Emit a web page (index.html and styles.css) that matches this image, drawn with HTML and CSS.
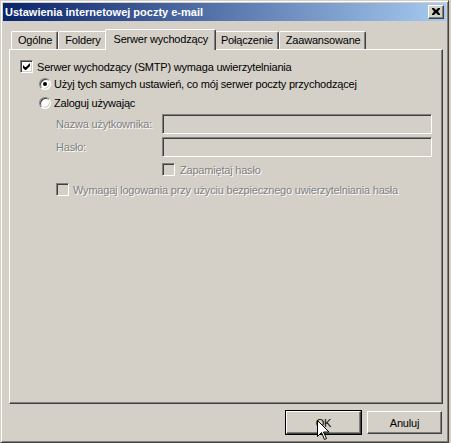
FILE: index.html
```html
<!DOCTYPE html>
<html lang="pl">
<head>
<meta charset="utf-8">
<title>Ustawienia internetowej poczty e-mail</title>
<link rel="stylesheet" href="styles.css">
</head>
<body>
<div class="window">
  <div class="titlebar">
    <span class="title">Ustawienia internetowej poczty e-mail</span>
    <span class="close-btn"><svg width="8" height="7" viewBox="0 0 8 7"><path d="M0 0h2l2 2 2-2h2v1l-2 2.5 2 2.5v1h-2l-2-2-2 2h-2v-1l2-2.5-2-2.5z" fill="#000"/></svg></span>
  </div>
  <div class="body">
    <div class="tabs">
      <div class="tab">Ogólne</div>
      <div class="tab">Foldery</div>
      <div class="tab active">Serwer wychodzący</div>
      <div class="tab">Połączenie</div>
      <div class="tab">Zaawansowane</div>
    </div>
    <div class="panel">
      <div class="row cb-row">
        <span class="checkbox checked"><svg width="7" height="7" viewBox="0 0 7 7"><path d="M0 2v3l2 2h1l4-4v-3l-4 4h-1z" fill="#000"/></svg></span>
        <span class="lbl">Serwer wychodzący (SMTP) wymaga uwierzytelniania</span>
      </div>
      <div class="row radio-row">
        <span class="radio"><span class="dot"></span></span>
        <span class="lbl">Użyj tych samych ustawień, co mój serwer poczty przychodzącej</span>
      </div>
      <div class="row radio-row second">
        <span class="radio"></span>
        <span class="lbl">Zaloguj używając</span>
      </div>
      <div class="field">
        <span class="flabel disabled">Nazwa użytkownika:</span>
        <span class="input"></span>
      </div>
      <div class="field field2">
        <span class="flabel disabled">Hasło:</span>
        <span class="input"></span>
      </div>
      <div class="row remember">
        <span class="checkbox dis"></span>
        <span class="lbl disabled">Zapamiętaj hasło</span>
      </div>
      <div class="row spa">
        <span class="checkbox dis"></span>
        <span class="lbl disabled">Wymagaj logowania przy użyciu bezpiecznego uwierzytelniania hasła</span>
      </div>
    </div>
    <div class="buttons">
      <span class="btn default">OK</span>
      <span class="btn">Anuluj</span>
    </div>
  </div>
  <svg class="cursor" width="13" height="21" viewBox="0 0 13 21"><path d="M0.5 0.5v16l4-4 3 7 2-1-3-6.5h5.5z" fill="#fff" stroke="#000" stroke-width="1"/></svg>
</div>
</body>
</html>
```
FILE: styles.css
```css
* { box-sizing: border-box; }
html, body { margin: 0; padding: 0; }
body {
  background: #d4d0c8;
  font-family: "Liberation Sans", Arial, sans-serif;
  font-size: 11px;
  color: #000;
}
.window {
  position: relative;
  width: 449px;
  height: 443px;
  background: #d4d0c8;
  border-top: 1px solid #d4d0c8;
  border-left: 1px solid #d4d0c8;
  border-right: 1px solid #404040;
  border-bottom: 1px solid #404040;
  box-shadow: inset 1px 1px 0 #fff, inset -1px -1px 0 #808080;
  padding: 2px;
  display: flex;
  flex-direction: column;
}
.titlebar {
  height: 18px;
  background: linear-gradient(to right, #0a246a, #a6caf0);
  display: flex;
  align-items: center;
  justify-content: space-between;
  padding-left: 2px;
  padding-right: 2px;
}
.title {
  color: #fff;
  font-weight: bold;
  font-size: 11px;
  white-space: nowrap;
}
.close-btn {
  width: 16px;
  height: 14px;
  background: #d4d0c8;
  border-top: 1px solid #fff;
  border-left: 1px solid #fff;
  border-right: 1px solid #404040;
  border-bottom: 1px solid #404040;
  box-shadow: inset -1px -1px 0 #808080;
  display: flex;
  align-items: center;
  justify-content: center;
  padding-bottom: 1px;
}
.close-btn svg { display: block; }
.body {
  flex: 1;
  display: flex;
  flex-direction: column;
  padding: 8px 3px 0 6px;
  letter-spacing: -0.2px;
}
.tabs {
  display: flex;
  align-items: flex-end;
  height: 20px;
  padding-left: 2px;
  position: relative;
  z-index: 1;
}
.tab {
  height: 18px;
  padding: 0 5px 0 6px;
  border-top: 1px solid #fff;
  border-left: 1px solid #fff;
  border-right: 1px solid #404040;
  box-shadow: inset -1px 0 0 #808080;
  border-radius: 2px 2px 0 0;
  line-height: 16px;
  white-space: nowrap;
  background: #d4d0c8;
}
.tab.active {
  height: 21px;
  margin: 0 -2px -1px -2px;
  padding: 0 7px 0 8px;
  line-height: 18px;
  position: relative;
  z-index: 2;
}
.panel {
  height: 355px;
  border-top: 1px solid #fff;
  border-left: 1px solid #fff;
  border-right: 1px solid #404040;
  border-bottom: 1px solid #404040;
  box-shadow: inset -1px -1px 0 #808080;
  padding: 10px 10px 0 10px;
  display: flex;
  flex-direction: column;
}
.row {
  display: flex;
  align-items: center;
  height: 13px;
  white-space: nowrap;
}
.cb-row .lbl { margin-left: 4px; }
.radio-row { margin-top: 4px; margin-left: 19px; height: 13px; }
.radio-row.second { margin-top: 6px; }
.radio-row .lbl { margin-left: 3px; }
.checkbox {
  width: 13px;
  height: 13px;
  flex: none;
  background: #fff;
  border-top: 1px solid #808080;
  border-left: 1px solid #808080;
  border-right: 1px solid #fff;
  border-bottom: 1px solid #fff;
  box-shadow: inset 1px 1px 0 #404040, inset -1px -1px 0 #d4d0c8;
  display: flex;
  align-items: center;
  justify-content: center;
}
.checkbox svg { display: block; }
.checkbox.dis { background: #d4d0c8; }
.radio {
  width: 12px;
  height: 12px;
  flex: none;
  border-radius: 50%;
  background: #fff;
  border-top: 1px solid #808080;
  border-left: 1px solid #808080;
  border-right: 1px solid #fff;
  border-bottom: 1px solid #fff;
  box-shadow: inset 1px 1px 0 #404040, inset -1px -1px 0 #d4d0c8;
  display: flex;
  align-items: center;
  justify-content: center;
}
.radio .dot {
  width: 4px;
  height: 4px;
  border-radius: 50%;
  background: #000;
}
.disabled {
  color: #808080;
  text-shadow: 1px 1px 0 #fff;
}
.field {
  display: flex;
  align-items: center;
  margin-top: 5px;
  margin-left: 36px;
  height: 20px;
}
.field2 { margin-top: 3px; }
.flabel {
  width: 106px;
  flex: none;
  white-space: nowrap;
}
.input {
  width: 270px;
  height: 20px;
  background: #d4d0c8;
  border-top: 1px solid #808080;
  border-left: 1px solid #808080;
  border-right: 1px solid #fff;
  border-bottom: 1px solid #fff;
  box-shadow: inset 1px 1px 0 #404040, inset -1px -1px 0 #d4d0c8;
}
.remember { margin-top: 6px; margin-left: 142px; }
.remember .lbl { margin-left: 5px; }
.spa { margin-top: 7px; margin-left: 36px; }
.spa .lbl { margin-left: 4px; }
.buttons {
  display: flex;
  justify-content: flex-end;
  gap: 6px;
  margin-top: 7px;
  padding-right: 1px;
}
.btn {
  width: 75px;
  height: 23px;
  display: flex;
  align-items: center;
  justify-content: center;
  background: #d4d0c8;
  border-top: 1px solid #fff;
  border-left: 1px solid #fff;
  border-right: 1px solid #404040;
  border-bottom: 1px solid #404040;
  box-shadow: inset -1px -1px 0 #808080;
}
.btn.default {
  outline: 1px solid #000;
}
.cursor {
  position: absolute;
  left: 316px;
  top: 419px;
}
```
